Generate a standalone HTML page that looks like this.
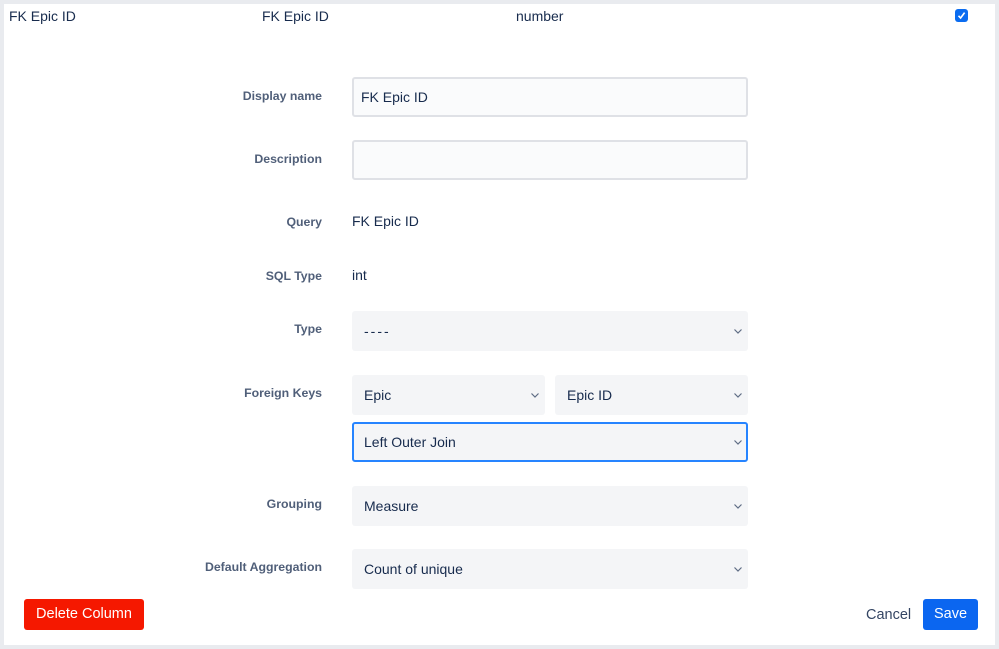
<!DOCTYPE html>
<html><head><meta charset="utf-8"><style>
*{box-sizing:border-box;margin:0;padding:0}
html,body{width:999px;height:649px;overflow:hidden;background:#e9ebef;font-family:"Liberation Sans",sans-serif}
.card{position:absolute;left:4px;top:4px;width:991px;height:641px;background:#fff}
.t{position:absolute;font-size:14px;color:#172b4d;white-space:nowrap}
.lbl{position:absolute;right:677px;font-size:12.3px;font-weight:bold;color:#505f79;text-align:right;white-space:nowrap}
.box{position:absolute;height:40px;border-radius:3px;background:#f4f5f7;font-size:14px;color:#172b4d;padding-left:12px;line-height:40px}
.inp{border:2px solid #dfe1e6;background:#fafbfc;padding-left:7px;line-height:36px}
.sel svg{position:absolute;right:5px;top:17px}
.foc{border:2px solid #2684ff;line-height:36px;padding-left:10px}
.foc svg{top:15px;right:3px}
.btn{position:absolute;top:599px;height:31px;border-radius:3px;color:#fff;font-size:14.5px;line-height:31px;text-align:center}
</style></head><body>
<div class="card"></div>
<div class="t" style="left:9px;top:8px">FK Epic ID</div>
<div class="t" style="left:262px;top:8px">FK Epic ID</div>
<div class="t" style="left:516px;top:8px">number</div>
<div style="position:absolute;left:955px;top:9px;width:13px;height:13px;border-radius:3px;background:#0b6cf0"><svg width="13" height="13"><path d="M3.5 6.8L5.6 9L9.6 3.6" stroke="#fff" stroke-width="1.6" fill="none"/></svg></div>

<div class="lbl" style="top:89px">Display name</div>
<div class="box inp" style="left:352px;top:77px;width:396px">FK Epic ID</div>
<div class="lbl" style="top:152px">Description</div>
<div class="box inp" style="left:352px;top:140px;width:396px"></div>
<div class="lbl" style="top:215px">Query</div>
<div class="t" style="left:352px;top:213px">FK Epic ID</div>
<div class="lbl" style="top:269px">SQL Type</div>
<div class="t" style="left:352px;top:267px">int</div>

<div class="lbl" style="top:322px">Type</div>
<div class="box sel" style="left:352px;top:311px;width:396px"><span style="letter-spacing:2px">----</span><svg width="10" height="7"><path d="M1.5 1.5l3.5 3.5 3.5-3.5" stroke="#5e6c84" stroke-width="1.2" fill="none"/></svg></div>
<div class="lbl" style="top:386px">Foreign Keys</div>
<div class="box sel" style="left:352px;top:375px;width:193px">Epic<svg width="10" height="7"><path d="M1.5 1.5l3.5 3.5 3.5-3.5" stroke="#5e6c84" stroke-width="1.2" fill="none"/></svg></div>
<div class="box sel" style="left:555px;top:375px;width:193px">Epic ID<svg width="10" height="7"><path d="M1.5 1.5l3.5 3.5 3.5-3.5" stroke="#5e6c84" stroke-width="1.2" fill="none"/></svg></div>
<div class="box sel foc" style="left:352px;top:422px;width:396px">Left Outer Join<svg width="10" height="7"><path d="M1.5 1.5l3.5 3.5 3.5-3.5" stroke="#5e6c84" stroke-width="1.2" fill="none"/></svg></div>

<div class="lbl" style="top:497px">Grouping</div>
<div class="box sel" style="left:352px;top:486px;width:396px">Measure<svg width="10" height="7"><path d="M1.5 1.5l3.5 3.5 3.5-3.5" stroke="#5e6c84" stroke-width="1.2" fill="none"/></svg></div>
<div class="lbl" style="top:560px">Default Aggregation</div>
<div class="box sel" style="left:352px;top:549px;width:396px">Count of unique<svg width="10" height="7"><path d="M1.5 1.5l3.5 3.5 3.5-3.5" stroke="#5e6c84" stroke-width="1.2" fill="none"/></svg></div>

<div class="btn" style="left:24px;width:120px;background:#f51800">Delete Column</div>
<div class="t" style="left:866px;top:607px;color:#344563;font-size:14.5px">Cancel</div>
<div class="btn" style="left:923px;width:55px;background:#0b66f0">Save</div>
</body></html>
